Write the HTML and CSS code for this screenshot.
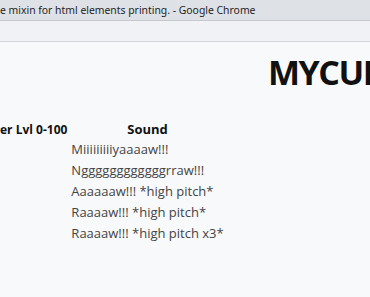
FILE: index.html
```html
<html>
	<head>
		<meta charset="UTF-8"/>
		<link rel="stylesheet" href="styles.css">
	</head>
	<body>
		<div class="tituloJanela">e mixin for html elements printing. - Google Chrome</div>
		<div class="barraFerramentas"></div>
		<div class="pagina">
			<h1 class="titulo">MYCUP</h1>
			<table class="tabela">
				<tr>
					<th class="colNivel">er Lvl 0-100</th>
					<th>Sound</th>
				</tr>
				<tr><td></td><td>Miiiiiiiiiyaaaaw!!!</td></tr>
				<tr><td></td><td>Nggggggggggggrraw!!!</td></tr>
				<tr><td></td><td>Aaaaaaw!!! *high pitch*</td></tr>
				<tr><td></td><td>Raaaaw!!! *high pitch*</td></tr>
				<tr><td></td><td>Raaaaw!!! *high pitch x3*</td></tr>
			</table>
		</div>
	</body>
</html>
```

FILE: styles.css
```css
body{
	margin:0;
	overflow:hidden;
	font-family:"Open Sans", "Noto Sans", sans-serif;
	background-color:#f8f9fb;
}
.tituloJanela{
	height:20px;
	line-height:20px;
	font-family:"Noto Sans", sans-serif;
	font-size:10.4px;
	color:#1f1f1f;
	background-color:#dee1e6;
	border-bottom:1px solid #c6c8cc;
	white-space:nowrap;
}
.barraFerramentas{
	height:20px;
	background-color:#f1f2f5;
	border-bottom:1px solid #d3d5d9;
}
.pagina{
	background-color:#f8f9fb;
	height:250px;
}
.titulo{
	margin:0;
	padding:7px 0 0 268px;
	font-size:34px;
	letter-spacing:-1.5px;
	line-height:46px;
	font-weight:700;
	color:#111;
	white-space:nowrap;
	overflow:hidden;
}
.tabela{
	margin-top:25px;
	border-collapse:collapse;
	font-size:13px;
}
.tabela th{
	line-height:19px;
	padding:0 2px;
	color:#111;
	font-weight:700;
	text-align:center;
}
.tabela th.colNivel{
	padding:0 2px 0 0;
	font-size:12px;
	text-align:left;
}
.tabela td{
	line-height:21px;
	padding:0 2px;
	color:#444;
}
```
